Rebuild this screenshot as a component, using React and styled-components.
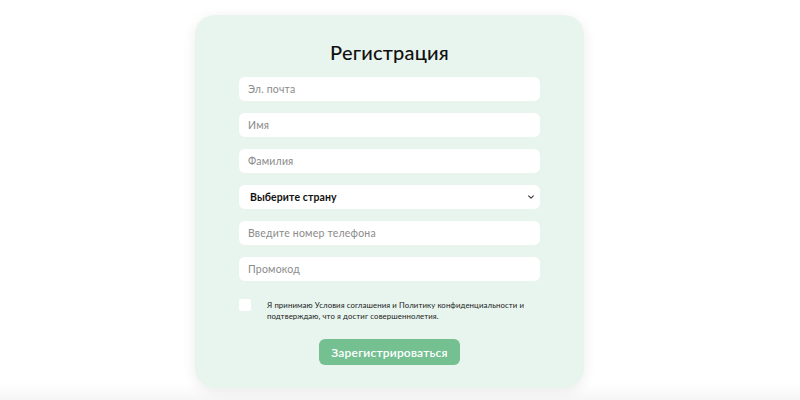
import React from "react";
import styled, { createGlobalStyle } from "styled-components";

const Global = createGlobalStyle`
  html, body { margin: 0; padding: 0; background: #fff; }
  body { font-family: "Lato", "Noto Sans", sans-serif; }
  * { box-sizing: border-box; }
`;

const Page = styled.div`
  min-height: 400px;
  display: flex;
  justify-content: flex-start;
  align-items: flex-start;
  padding: 15px 0 0 195px;
  background: linear-gradient(to bottom, #ffffff 0, #ffffff 384px, #f6f6f6 400px);
`;

const Card = styled.form`
  width: 389px;
  background: #e8f5ee;
  border-radius: 20px;
  box-shadow: 0 3px 14px rgba(0, 0, 0, 0.08);
  padding: 24px 44px 23px;
  display: flex;
  flex-direction: column;
  align-items: stretch;
`;

const Title = styled.h1`
  margin: 0 0 12px;
  font-family: "Lato", sans-serif;
  font-weight: 500;
  font-size: 20px;
  line-height: 26px;
  text-align: center;
  color: #111;
  letter-spacing: 0.2px;
`;

const Fields = styled.div`
  display: flex;
  flex-direction: column;
  gap: 12px;
`;

const Input = styled.input`
  height: 24px;
  width: 100%;
  border: none;
  outline: none;
  border-radius: 6px;
  background: #fff;
  padding: 0 9px;
  font-family: "Lato", sans-serif;
  font-size: 10.5px;
  color: #222;
  &::placeholder { color: #8b8b8b; letter-spacing: 0.2px; }
`;

const SelectBox = styled.div`
  height: 24px;
  border-radius: 6px;
  background: #fff;
  display: flex;
  align-items: center;
  justify-content: space-between;
  padding: 0 5px 0 11px;
  font-family: "Lato", sans-serif;
  font-size: 10.5px;
  font-weight: 700;
  color: #111;
  letter-spacing: 0.1px;
`;

const Agree = styled.label`
  margin-top: 18px;
  display: flex;
  align-items: flex-start;
  gap: 16px;
`;

const Box = styled.span`
  flex: none;
  width: 12px;
  height: 12px;
  background: #fff;
  border-radius: 2px;
`;

const AgreeText = styled.span`
  padding-top: 1px;
  font-family: "Lato", sans-serif;
  font-size: 7.8px;
  line-height: 11px;
  color: #222;
  letter-spacing: 0.1px;
  max-width: 273px;
`;

const Button = styled.button`
  margin: 17px auto 0;
  width: 141px;
  height: 26px;
  border: none;
  border-radius: 6px;
  background: #74c091;
  color: #fff;
  font-family: "Lato", sans-serif;
  font-size: 12px;
  font-weight: 600;
  letter-spacing: 0.2px;
  cursor: pointer;
`;

const Chevron = () => (
  <svg width="8" height="8" viewBox="0 0 10 10" fill="none">
    <path d="M2 3.5 L5 6.5 L8 3.5" stroke="#333" strokeWidth="1.3" strokeLinecap="round" strokeLinejoin="round" />
  </svg>
);

export default function App() {
  return (
    <>
      <Global />
      <Page>
        <Card onSubmit={(e) => e.preventDefault()}>
          <Title>Регистрация</Title>
          <Fields>
            <Input placeholder="Эл. почта" />
            <Input placeholder="Имя" />
            <Input placeholder="Фамилия" />
            <SelectBox>
              Выберите страну
              <Chevron />
            </SelectBox>
            <Input placeholder="Введите номер телефона" />
            <Input placeholder="Промокод" />
          </Fields>
          <Agree>
            <Box />
            <AgreeText>
              Я принимаю Условия соглашения и Политику конфиденциальности и подтверждаю, что я достиг совершеннолетия.
            </AgreeText>
          </Agree>
          <Button type="submit">Зарегистрироваться</Button>
        </Card>
      </Page>
    </>
  );
}
